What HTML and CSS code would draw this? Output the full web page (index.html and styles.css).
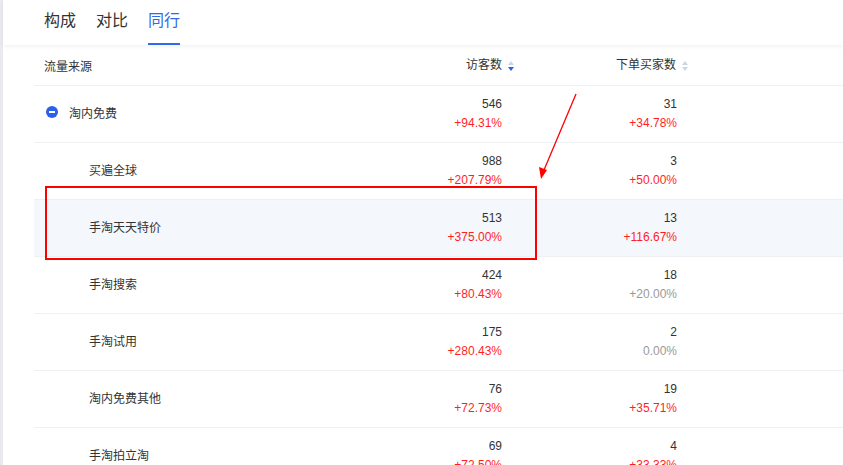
FILE: index.html
```html
<!DOCTYPE html>
<html lang="zh-CN">
<head>
  <meta charset="UTF-8">
  <title>流量来源 – 同行</title>
  <link rel="stylesheet" href="styles.css">
</head>
<body>
  <div class="page">
    <div class="tabs">
      <span class="tab">构成</span>
      <span class="tab">对比</span>
      <span class="tab active">同行</span>
    </div>

    <div class="table">
      <div class="row head">
        <div class="cell name">流量来源</div>
        <div class="cell num">访客数 <span class="sort down"></span></div>
        <div class="cell num">下单买家数 <span class="sort"></span></div>
      </div>

      <div class="row">
        <div class="cell name parent"><span class="collapse"></span>淘内免费</div>
        <div class="cell num"><span>546</span><span class="up">+94.31%</span></div>
        <div class="cell num"><span>31</span><span class="up">+34.78%</span></div>
      </div>
      <div class="row">
        <div class="cell name child">买遍全球</div>
        <div class="cell num"><span>988</span><span class="up">+207.79%</span></div>
        <div class="cell num"><span>3</span><span class="up">+50.00%</span></div>
      </div>
      <div class="row hover">
        <div class="cell name child">手淘天天特价</div>
        <div class="cell num"><span>513</span><span class="up">+375.00%</span></div>
        <div class="cell num"><span>13</span><span class="up">+116.67%</span></div>
      </div>
      <div class="row">
        <div class="cell name child">手淘搜索</div>
        <div class="cell num"><span>424</span><span class="up">+80.43%</span></div>
        <div class="cell num"><span>18</span><span class="flat">+20.00%</span></div>
      </div>
      <div class="row">
        <div class="cell name child">手淘试用</div>
        <div class="cell num"><span>175</span><span class="up">+280.43%</span></div>
        <div class="cell num"><span>2</span><span class="flat">0.00%</span></div>
      </div>
      <div class="row">
        <div class="cell name child">淘内免费其他</div>
        <div class="cell num"><span>76</span><span class="up">+72.73%</span></div>
        <div class="cell num"><span>19</span><span class="up">+35.71%</span></div>
      </div>
      <div class="row">
        <div class="cell name child">手淘拍立淘</div>
        <div class="cell num"><span>69</span><span class="up">+72.50%</span></div>
        <div class="cell num"><span>4</span><span class="up">+33.33%</span></div>
      </div>
    </div>

    <!-- annotazione rossa sopra la tabella -->
    <div class="mark-box"></div>
    <svg class="mark-arrow" width="843" height="465" viewBox="0 0 843 465">
      <line x1="576" y1="94" x2="544" y2="170" stroke="#f00" stroke-width="1.3"/>
      <polygon points="541,179 539,167 547,170" fill="#f00"/>
    </svg>
  </div>
</body>
</html>
```

FILE: styles.css
```css
body {
  margin: 0;
  background: #fff;
  color: #333;
  font-family: "Liberation Sans", "Noto Sans CJK SC", sans-serif;
  overflow: hidden;
}

.page {
  position: relative;
  height: 465px;
  border-left: 3px solid #e8eaef;
  box-sizing: border-box;
}

/* --- Tabs --- */
.tabs {
  display: flex;
  gap: 20px;
  height: 45px;
  padding-left: 41px;
  box-shadow: 0 2px 4px rgba(0, 0, 0, 0.05);
  position: relative;
  z-index: 1;
}

.tab {
  font-size: 16px;
  line-height: 41px;
  color: #333;
  border-bottom: 2px solid transparent;
  box-sizing: border-box;
  height: 45px;
}

.tab.active {
  color: #2f6be6;
  border-bottom-color: #2f6be6;
}

/* --- Tabella --- */
.table {
  margin-left: 31px;
  font-size: 12px;
}

.row {
  display: grid;
  grid-template-columns: 300px 184px 175px 1fr;
  height: 56px;
  border-bottom: 1px solid #eef0f3;
  align-items: center;
}

.row.head {
  height: 39px;
  padding-top: 1px;
}

.row.hover {
  background: #f4f7fc;
}

.cell.name {
  padding-left: 10px;
  padding-bottom: 4px;
  display: flex;
  align-items: center;
}

.head .cell.name {
  padding-bottom: 0;
}

.cell.parent {
  padding-left: 12px;
}

.cell.child {
  padding-left: 55px;
}

.cell.num {
  display: flex;
  flex-direction: column;
  align-items: flex-end;
  padding-right: 16px;
  line-height: 19px;
}

.head .cell.num {
  flex-direction: row;
  justify-content: flex-end;
  align-items: center;
  gap: 6px;
  padding-right: 4px;
}

.head .cell.num:last-child {
  padding-right: 5px;
}

.up {
  color: #ff1f1f;
}

.flat {
  color: #999;
}

.collapse {
  width: 12px;
  height: 12px;
  border-radius: 50%;
  background: #2d5fe8;
  margin-right: 11px;
  position: relative;
}

.collapse::after {
  content: "";
  position: absolute;
  left: 3px;
  top: 5px;
  width: 6px;
  height: 2px;
  background: #fff;
}

.sort {
  width: 6px;
  height: 10px;
  position: relative;
}

.sort::before,
.sort::after {
  content: "";
  position: absolute;
  left: 0;
  border-left: 3px solid transparent;
  border-right: 3px solid transparent;
}

.sort::before {
  top: 0;
  border-bottom: 4px solid #cdd6e6;
}

.sort::after {
  bottom: 0;
  border-top: 4px solid #cdd6e6;
}

.sort.down::after {
  border-top-color: #2d5fe8;
}

/* --- Annotazione --- */
.mark-box {
  position: absolute;
  left: 42px;
  top: 186px;
  width: 488px;
  height: 70px;
  border: 2px solid #f00;
}

.mark-arrow {
  position: absolute;
  left: -3px;
  top: 0;
  pointer-events: none;
}
```
